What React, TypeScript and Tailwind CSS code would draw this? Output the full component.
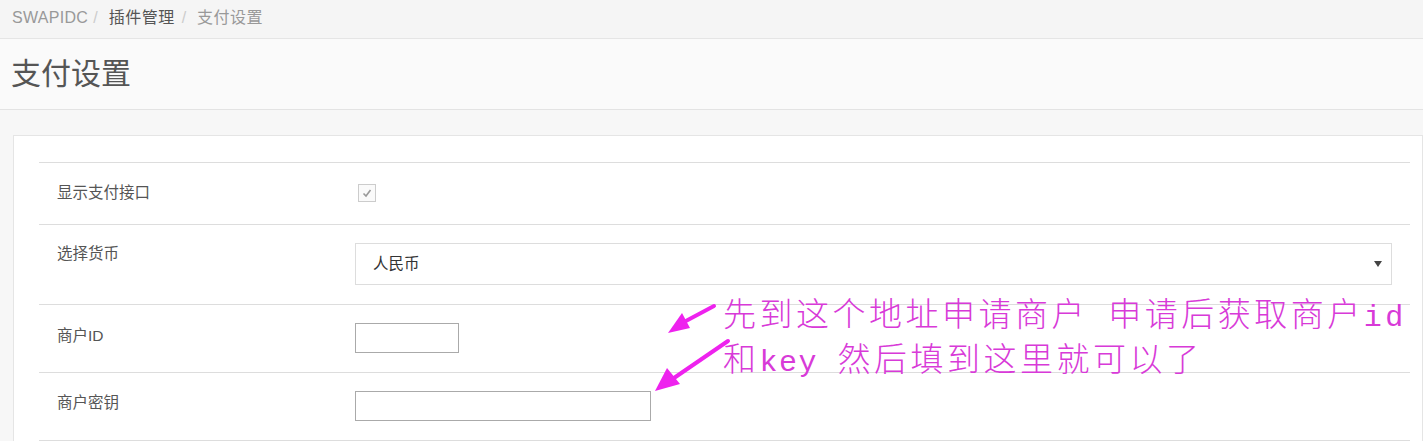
import React from "react";

const sans = { fontFamily: '"Liberation Sans", "Noto Sans CJK SC", sans-serif' };

function Row({
  label,
  height,
  labelTop,
  children,
}: {
  label: string;
  height: string;
  labelTop: string;
  children: React.ReactNode;
}) {
  return (
    <div className={`flex border-t border-[#ddd] ${height}`}>
      <div className={`w-[298px] shrink-0 pl-[18px] ${labelTop} text-[15.5px] leading-[20px] text-[#555]`}>{label}</div>
      <div className="flex-1 pl-[18px]">{children}</div>
    </div>
  );
}

export default function App() {
  return (
    <div className="relative w-[1423px] h-[441px] overflow-hidden bg-[#f7f7f7]" style={sans}>
      {/* breadcrumb */}
      <div className="h-[39px] bg-[#f5f5f5] border-b border-[#e5e5e5] flex items-center pl-[12px] text-[16px] pb-[2px]">
        <span className="text-[#999] tracking-[0.3px]">SWAPIDC</span>
        <span className="text-[#ccc] pl-[5px] pr-[11px]">/</span>
        <span className="text-[#555] tracking-[0.5px]">插件管理</span>
        <span className="text-[#ccc] pl-[7px] pr-[11px]">/</span>
        <span className="text-[#999] tracking-[0.5px]">支付设置</span>
      </div>
      {/* page title */}
      <div className="h-[71px] bg-[#fafafa] border-b border-[#e3e3e3] flex items-center pl-[11px]">
        <h1 className="text-[30px] text-[#555] leading-none">支付设置</h1>
      </div>
      {/* card */}
      <div className="ml-[13px] mt-[25px] bg-white border border-[#e5e5e5] pl-[25px] pr-[12px] pt-[26px]">
        <div>
          <Row label="显示支付接口" height="h-[62px]" labelTop="pt-[20px]">
            <div className="mt-[21px] ml-[3px] w-[18px] h-[18px] border border-[#ccc] bg-[#fafafa] flex items-center justify-center">
              <svg width="12" height="12" viewBox="0 0 12 12">
                <path d="M2.5 6.5 L5 9 L9.5 3" fill="none" stroke="#999" strokeWidth="1.6" />
              </svg>
            </div>
          </Row>
          <Row label="选择货币" height="h-[80px]" labelTop="pt-[19px]">
            <div className="mt-[18px] w-[1037px] h-[42px] border border-[#ddd] flex items-center justify-between pl-[17px] pr-[9px] text-[15.5px] text-[#333]">
              <span>人民币</span>
              <svg width="8" height="6" viewBox="0 0 8 6">
                <path d="M0 0 H8 L4 6 Z" fill="#444" />
              </svg>
            </div>
          </Row>
          <Row label="商户ID" height="h-[68px]" labelTop="pt-[21px]">
            <div className="mt-[18px] w-[104px] h-[30px] border border-[#aaa] bg-white" />
          </Row>
          <Row label="商户密钥" height="h-[68px]" labelTop="pt-[20px]">
            <div className="mt-[18px] w-[296px] h-[30px] border border-[#aaa] bg-white" />
          </Row>
          <div className="border-t border-[#ddd] h-[20px]" />
        </div>
      </div>

      {/* handwritten note */}
      <div
        className="absolute left-[723px] top-[296px] text-[33px] leading-[44px] text-[#d83ad8] tracking-[3.5px] whitespace-nowrap"
        style={{ fontFamily: '"Liberation Mono", "Noto Sans CJK SC", monospace', fontWeight: 300 }}
      >
        <div>
          先到这个地址申请商户<span className="text-[28px]"> </span>申请后获取商户<span className="text-[30px]">id</span>
        </div>
        <div>
          和<span className="text-[30px] tracking-[1.5px]">key </span>然后填到这里就可以了
        </div>
      </div>
      <svg className="absolute left-0 top-0" width="1423" height="441" viewBox="0 0 1423 441">
        <path d="M714 306 L684 322" stroke="#ee22ee" strokeWidth="4" strokeLinecap="round" />
        <path d="M668 333 L682 313 L690 328 Z" fill="#ee22ee" />
        <path d="M728 341 L674 378" stroke="#ee22ee" strokeWidth="4" strokeLinecap="round" />
        <path d="M655 391 L667 368 L680 384 Z" fill="#ee22ee" />
      </svg>
    </div>
  );
}
